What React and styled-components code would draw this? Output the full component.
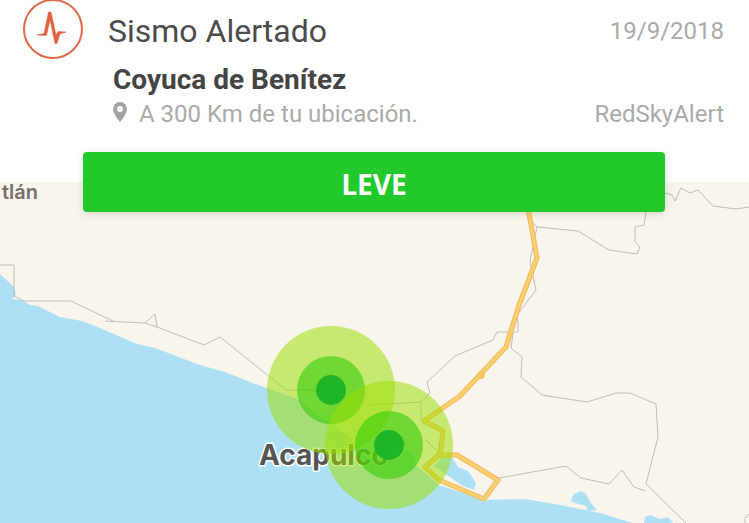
import styled, { createGlobalStyle } from 'styled-components';

const quakes = [
    { id: 'coyuca', x: 331, y: 390 },
    { id: 'acapulco', x: 389, y: 445 },
];

const minorRoads = [
    'M0 265H14V296L24 301H71L113 321',
    'M105 321L145 323L155 314L157 327M145 323L157 327L204 345L220 337L250 361L286 390H331',
    'M368 405L421 402V421M421 402L430 393L427 382L455 356L493 340L497 332H518V323L517 315L536 290L530 262L537 227L532 222M537 227L578 231L609 250L637 254L640 247L635 242V227L644 225L646 212',
    'M665 193L672 195L675 201L681 188L690 193L698 190L713 206L736 209L749 207',
    'M513 333L511 348L522 357L521 377L542 395L587 402L616 393H630L656 404L658 437L646 484L686 523',
    'M499 478L566 466L581 478L609 484L622 470L634 487L646 491',
    'M749 514L745 518V523',
    'M400 436Q408 438 404 446M426 440L440 454',
];

const highway =
    'M528 208L537 258L519 305L506 347L460 396L424 421L443 431L440 454L425 467L439 480L484 499L498 480L457 455H440';

function App() {
    return (
        <Page>
            <GlobalStyle />
            <Header>
                <Logo viewBox="0 0 62 62" aria-hidden="true">
                    <circle cx="31" cy="29" r="29" fill="none" stroke="#e0694a" strokeWidth="2" />
                    <path
                        d="M15 35L22 33.5L26.5 12H29L34 35L36 31.5L44 32L38 34L35 43.5H33L28 20L24.5 35.5Z"
                        fill="#e0623f"
                        stroke="#e0623f"
                        strokeWidth="0.5"
                    />
                </Logo>
                <Info>
                    <Row $height={62}>
                        <Title>Sismo Alertado</Title>
                        <Muted as="time" dateTime="2018-09-19">
                            19/9/2018
                        </Muted>
                    </Row>
                    <Row $height={34} $indent>
                        <Place>Coyuca de Benítez</Place>
                    </Row>
                    <Row $height={36} $indent>
                        <Distance>
                            <Pin viewBox="0 0 14 20" aria-hidden="true">
                                <path
                                    fillRule="evenodd"
                                    d="M7 0A7 7 0 0 0 0 7C0 12 7 20 7 20S14 12 14 7A7 7 0 0 0 7 0ZM7 4A3 3 0 1 1 7 10A3 3 0 1 1 7 4Z"
                                    fill="#a3a3a3"
                                />
                            </Pin>
                            <Muted>A 300 Km de tu ubicación.</Muted>
                        </Distance>
                        <Muted>RedSkyAlert</Muted>
                    </Row>
                </Info>
            </Header>
            <Level type="button">LEVE</Level>
            <Map viewBox="0 182 749 341" role="img" aria-label="Mapa del sismo">
                <rect y="182" width="749" height="341" fill="#f9f4ec" />
                {/* mar */}
                <path
                    d="M0 274L14 287L16 294L12 299L22 300L30 305L38 306L60 317L82 321L100 328L137 344L155 348L200 365L225 372L250 382L298 399L312 412L330 422L348 436L362 452L378 462L396 460L408 449L414 455L416 466L424 472L439 485L484 500L525 499L560 505L600 513L632 523H0Z"
                    fill="#aee0f5"
                />
                {/* lagunas */}
                <path
                    d="M434 466L443 456L452 457L458 467L468 471L476 483L474 490L463 486L447 475ZM571 499L574 494L581 491L586 494L590 502L597 510L588 511L586 506L572 502ZM645 517L650 515L660 519L668 517L673 523H644Z"
                    fill="#aee0f5"
                />
                {minorRoads.map((d) => (
                    <path key={d} d={d} fill="none" stroke="#c1bdb6" />
                ))}
                <path d={highway} fill="none" stroke="#efb95b" strokeWidth="5" strokeLinejoin="round" />
                <path d={highway} fill="none" stroke="#fbd06f" strokeWidth="3" strokeLinejoin="round" />
                <circle cx="481" cy="375" r="4" fill="#f6c665" />
                <Town x="38" y="199" textAnchor="end">
                    tlán
                </Town>
                <City x="259" y="465">
                    Acapulco
                </City>
                {quakes.map(({ id, x, y }) => (
                    <g key={id}>
                        <circle cx={x} cy={y} r="64" fill="#99df00" fillOpacity="0.52" />
                        <circle cx={x} cy={y} r="34" fill="#36cd08" fillOpacity="0.6" />
                        <circle cx={x} cy={y} r="15" fill="#20b527" />
                    </g>
                ))}
            </Map>
        </Page>
    );
}
export default App;

const GlobalStyle = createGlobalStyle`
    body {
        margin: 0;
        background-color: #ffffff;
        font-family: Roboto, sans-serif;
    }
`;

const Page = styled.main`
    display: flex;
    flex-direction: column;
    overflow: hidden;
`;

const Header = styled.header`
    display: flex;
    gap: 24px;
    padding: 0 25px 20px 22px;
`;

const Logo = styled.svg`
    flex: none;
    width: 62px;
    height: 62px;
`;

const Info = styled.div`
    flex: 1;
`;

const Row = styled.div`
    display: flex;
    justify-content: space-between;
    align-items: center;
    height: ${({ $height }) => $height}px;
    padding-left: ${({ $indent }) => ($indent ? 5 : 0)}px;
`;

const Title = styled.h1`
    margin: 0;
    font-size: 32px;
    font-weight: 400;
    color: #4b4b4b;
`;

const Place = styled.h2`
    margin: 0;
    font-size: 28px;
    font-weight: 700;
    color: #444444;
`;

const Muted = styled.span`
    font-size: 24px;
    color: #aaaaaa;
`;

const Distance = styled.div`
    display: flex;
    align-items: center;
    gap: 12px;
`;

const Pin = styled.svg`
    width: 14px;
    height: 20px;
    margin-bottom: 4px;
`;

const Level = styled.button`
    z-index: 1;
    height: 60px;
    margin: 0 84px -30px 83px;
    padding: 4px 0 0;
    border: 0;
    border-radius: 4px;
    background-color: #22c92b;
    box-shadow: 0 2px 8px rgba(0, 0, 0, 0.12);
    font-family: 'Noto Sans', sans-serif;
    font-size: 28px;
    font-weight: 700;
    color: #ffffff;
    cursor: pointer;
`;

const Map = styled.svg`
    display: block;
    width: 100%;
`;

const Town = styled.text`
    font-family: Inter, sans-serif;
    font-size: 20px;
    font-weight: 600;
    fill: #75706c;
`;

const City = styled.text`
    font-family: Inter, sans-serif;
    font-size: 28px;
    font-weight: 700;
    fill: #555555;
    stroke: #ffffff;
    stroke-width: 3px;
    stroke-linejoin: round;
    paint-order: stroke;
`;
